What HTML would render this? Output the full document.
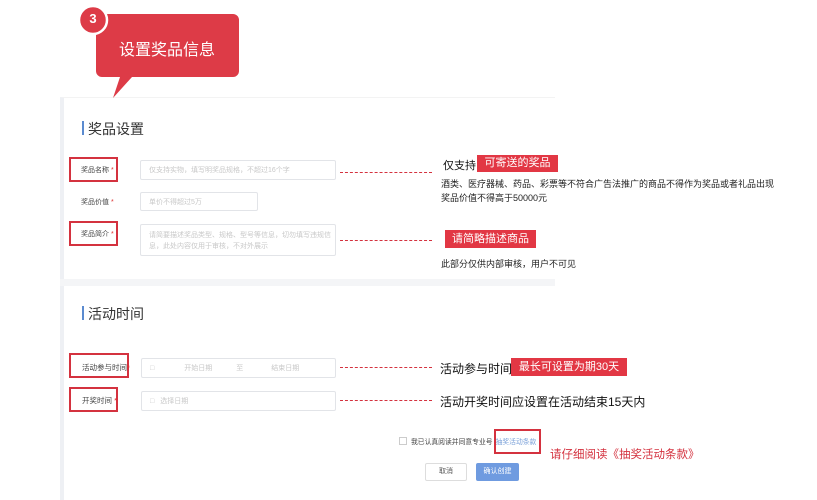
<!DOCTYPE html>
<html><head><meta charset="utf-8"><style>
*{margin:0;padding:0;box-sizing:border-box}
body{width:817px;height:500px;background:#fff;position:relative;overflow:hidden;font-family:"Liberation Sans","Noto Sans CJK SC",sans-serif;color:#333}
.a{position:absolute;white-space:nowrap}
.panel{position:absolute;left:60px;top:97px;width:495px;height:403px;border-left:4px solid #eef0f4;border-top:1px solid #f3f3f3;background:#fff}
.h{font-size:14px;color:#333}
.bar{position:absolute;width:2px;height:14px;background:#5b8bd0}
.lbl{font-size:7px;color:#444}
.rb{position:absolute;border:2px solid #d4323f}
.inp{position:absolute;border:1px solid #e2e4e8;border-radius:2px;background:#fff;font-size:7px;color:#c8c8c8;padding-left:8px;display:flex;align-items:center}
.dash{position:absolute;height:0;border-top:1.5px dashed #d4323f;width:92px}
.tag{position:absolute;background:#e23744;color:#fff;font-size:11px;text-align:center}
.t12{font-size:12px;color:#111}
.t9{font-size:9px;color:#222}
</style></head><body>
<div class="panel"></div>
<div class="a" style="left:60px;top:279px;width:495px;height:7px;background:#f4f5f7"></div>
<svg class="a" style="left:76px;top:2px" width="170" height="98">
<path d="M30 12 H157 a6 6 0 0 1 6 6 V69 a6 6 0 0 1 -6 6 H56 L37 96 L44 75 H26 a6 6 0 0 1 -6 -6 V18 a6 6 0 0 1 6 -6z" fill="#dd3b47"/>
<circle cx="17" cy="18" r="14" fill="#dd3b47" stroke="#fff" stroke-width="2.5"/>
</svg>
<div class="a" style="left:85px;top:11px;width:16px;text-align:center;color:#fff;font-weight:bold;font-size:13px">3</div>
<div class="a" style="left:119px;top:36px;color:#fff;font-size:16px">设置奖品信息</div>

<div class="bar" style="left:82px;top:121px"></div>
<div class="a h" style="left:88px;top:119px">奖品设置</div>
<div class="rb" style="left:69px;top:157px;width:49px;height:25px"></div>
<div class="a lbl" style="left:81px;top:165px">奖品名称 <span style="color:#d33">*</span></div>
<div class="inp" style="left:140px;top:160px;width:196px;height:20px">仅支持实物，填写明奖品规格，不超过16个字</div>
<div class="a lbl" style="left:81px;top:197px">奖品价值 <span style="color:#d33">*</span></div>
<div class="inp" style="left:140px;top:192px;width:118px;height:19px">单价不得超过5万</div>
<div class="rb" style="left:69px;top:221px;width:49px;height:25px"></div>
<div class="a lbl" style="left:81px;top:229px">奖品简介 <span style="color:#d33">*</span></div>
<div class="inp" style="left:140px;top:224px;width:196px;height:32px;align-items:flex-start;padding-top:5px;white-space:normal;line-height:11px">请简要描述奖品类型、规格、型号等信息，切勿填写违规信息，此处内容仅用于审核，不对外展示</div>
<div class="dash" style="left:340px;top:172px"></div>
<div class="dash" style="left:340px;top:240px"></div>
<div class="a" style="left:443px;top:157px;font-size:11px;color:#111">仅支持</div>
<div class="tag" style="left:477px;top:155px;width:81px;height:17px;line-height:17px">可寄送的奖品</div>
<div class="a t9" style="left:441px;top:177px">酒类、医疗器械、药品、彩票等不符合广告法推广的商品不得作为奖品或者礼品出现</div>
<div class="a t9" style="left:441px;top:191px">奖品价值不得高于50000元</div>
<div class="tag" style="left:445px;top:230px;width:91px;height:18px;line-height:18px">请简略描述商品</div>
<div class="a t9" style="left:441px;top:257px">此部分仅供内部审核，用户不可见</div>

<div class="bar" style="left:82px;top:306px"></div>
<div class="a h" style="left:88px;top:304px">活动时间</div>
<div class="rb" style="left:69px;top:353px;width:60px;height:25px"></div>
<div class="a" style="left:82px;top:362px;font-size:7.5px;color:#444">活动参与时间<span style="color:#d33">*</span></div>
<div class="inp" style="left:141px;top:358px;width:195px;height:20px">□<span style="margin-left:30px">开始日期</span><span style="margin-left:24px">至</span><span style="margin-left:28px">结束日期</span></div>
<div class="rb" style="left:69px;top:387px;width:49px;height:25px"></div>
<div class="a" style="left:82px;top:395px;font-size:7.5px;color:#444">开奖时间 <span style="color:#d33">*</span></div>
<div class="inp" style="left:141px;top:391px;width:195px;height:20px">□<span style="margin-left:6px">选择日期</span></div>
<div class="dash" style="left:340px;top:367px"></div>
<div class="dash" style="left:340px;top:400px"></div>
<div class="a t12" style="left:440px;top:360px">活动参与时间</div>
<div class="tag" style="left:511px;top:358px;width:116px;height:18px;line-height:18px">最长可设置为期30天</div>
<div class="a t12" style="left:440px;top:393px">活动开奖时间应设置在活动结束15天内</div>

<div class="a" style="left:399px;top:437px;width:8px;height:8px;border:1px solid #ccc"></div>
<div class="a" style="left:411px;top:436px;font-size:6.8px;color:#444">我已认真阅读并同意专业号<span style="color:#7aa0d8;margin-left:3px">抽奖活动条款</span></div>
<div class="rb" style="left:494px;top:429px;width:47px;height:25px"></div>
<div class="a" style="left:550px;top:446px;font-size:11.5px;color:#d4323f">请仔细阅读《抽奖活动条款》</div>
<div class="a" style="left:425px;top:463px;width:42px;height:18px;border:1px solid #ddd;border-radius:2px;font-size:7px;text-align:center;line-height:16px;color:#555">取消</div>
<div class="a" style="left:476px;top:463px;width:43px;height:18px;background:#6f9be0;border-radius:2px;font-size:7px;text-align:center;line-height:18px;color:#fff">确认创建</div>
</body></html>
